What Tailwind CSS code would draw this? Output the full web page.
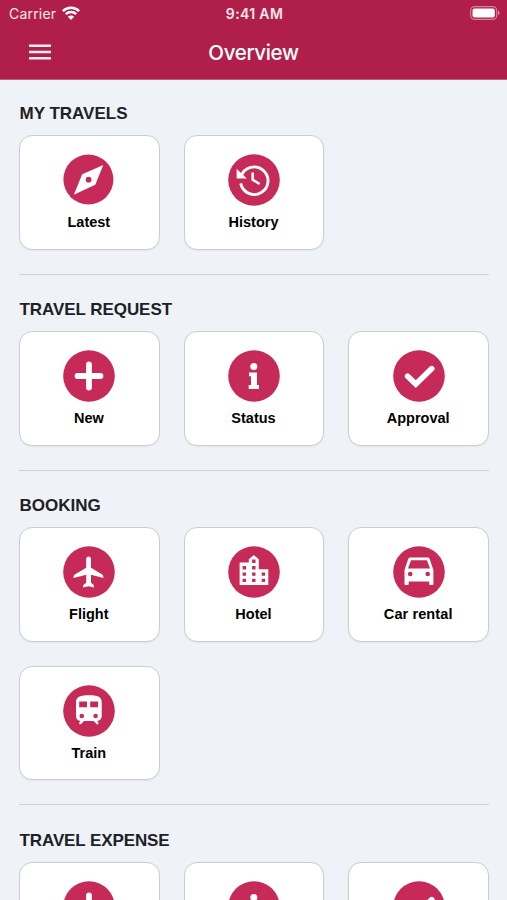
<!DOCTYPE html>
<html lang="en">
<head>
  <meta charset="UTF-8">
  <meta name="viewport" content="width=device-width, initial-scale=1.0">
  <title>Overview</title>
  <script src="https://cdn.jsdelivr.net/npm/@tailwindcss/browser@4"></script>
</head>
<body class="bg-[#eff2f7]">
  <!-- Icon sprite -->
  <svg class="hidden">
    <symbol id="compass" viewBox="0 0 52 52">
      <circle cx="25.4" cy="25.5" r="25" fill="#c62a59"/>
      <path fill="#fff" d="M40.3 11 32.3 30.7 10.8 40.7 19.2 20.3Z"/>
      <circle cx="25.6" cy="25.7" r="2.9" fill="#c62a59"/>
    </symbol>
    <symbol id="history" viewBox="0 0 52 52">
      <circle cx="26" cy="26" r="25.8" fill="#c62a59"/>
      <path fill="none" stroke="#fff" stroke-width="2.9" d="M13.2 22.2A13.8 13.8 0 1 1 12.7 29.4"/>
      <path fill="#fff" d="M8.6 14.8 18.8 24.6H8.6Z"/>
      <path fill="none" stroke="#fff" stroke-width="2.6" d="M24.7 18.6V25.8L31.6 30"/>
    </symbol>
    <symbol id="plus" viewBox="0 0 52 52">
      <circle cx="26" cy="26" r="25.8" fill="#c62a59"/>
      <path stroke="#fff" stroke-width="5.8" stroke-linecap="round" d="M26 14.5V37.5M14.5 26H37.5"/>
    </symbol>
    <symbol id="info" viewBox="0 0 52 52">
      <circle cx="26" cy="26" r="25.8" fill="#c62a59"/>
      <circle cx="25.8" cy="16.5" r="3.5" fill="#fff"/>
      <path fill="#fff" d="M21 22.5H29V35H31V39H20.7V35H23V26.3H21Z"/>
    </symbol>
    <symbol id="check" viewBox="0 0 52 52">
      <circle cx="26" cy="26" r="25.8" fill="#c62a59"/>
      <path fill="none" stroke="#fff" stroke-width="5.6" stroke-linecap="round" d="M14.6 26.3 22.8 34.1 38.8 18.6"/>
    </symbol>
    <symbol id="plane" viewBox="0 0 52 52">
      <circle cx="26" cy="26" r="25.8" fill="#c62a59"/>
      <path fill="#fff" d="M25.6 10.6C27.1 10.6 28 11.8 28 13.2V21.7L39.2 28.6C40.1 29.2 40.4 30 40.4 32L28 28.8V36.8L31 39.3V41.6L25.6 40.3 20 41.6V39.3L23.2 36.8V28.8L10.5 32C10.5 30 10.9 29.2 11.8 28.6L23.2 21.7V13.2C23.2 11.8 24.1 10.6 25.6 10.6Z"/>
    </symbol>
    <symbol id="hotel" viewBox="0 0 52 52">
      <circle cx="26" cy="26" r="25.8" fill="#c62a59"/>
      <path fill="#fff" d="M11.6 16.4H20.8V13.3L25.8 9 30.8 13.3V23.3H40.3V39H11.6Z"/>
      <path fill="#c62a59" d="M24.1 13.6h3.4v3.4h-3.4zM14.6 20h3.4v3.4h-3.4zM24.1 20h3.4v3.4h-3.4zM14.6 26.4h3.4v3.4h-3.4zM24.1 26.4h3.4v3.4h-3.4zM33.7 26.4h3.4v3.4h-3.4zM14.6 32.7h3.4v3.4h-3.4zM24.1 32.7h3.4v3.4h-3.4zM33.7 32.7h3.4v3.4h-3.4z"/>
    </symbol>
    <symbol id="car" viewBox="0 0 52 52">
      <circle cx="26" cy="26" r="25.8" fill="#c62a59"/>
      <path fill="#fff" d="M17.6 11.6H34.4C35.6 11.6 36.4 12.2 36.8 13.3L40.4 24V38C40.4 38.7 40 39.1 39.3 39.1H37.4C36.7 39.1 36.2 38.7 36.2 38V35.6H15.7V38C15.7 38.7 15.2 39.1 14.5 39.1H12.6C11.9 39.1 11.5 38.7 11.5 38V24L15.1 13.3C15.5 12.2 16.4 11.6 17.6 11.6Z"/>
      <path fill="#c62a59" d="M18 14.2H33.9L37 22.4H15Z"/>
      <circle cx="17.2" cy="28" r="2.3" fill="#c62a59"/>
      <circle cx="34.7" cy="28" r="2.3" fill="#c62a59"/>
    </symbol>
    <symbol id="train" viewBox="0 0 52 52">
      <circle cx="26" cy="26" r="25.8" fill="#c62a59"/>
      <path fill="#fff" d="M13 17C13 11.6 18 10.2 26 10.2S38.7 11.6 38.7 17V31C38.7 34 36.8 35.6 34.2 36L35.3 37.3V39.3H33.8L30.6 36H21L17.8 39.3H16.3V37.3L17.5 36C14.9 35.6 13 34 13 31Z"/>
      <path fill="#c62a59" d="M16.2 16.4h7.8v5.8h-7.8zM27.2 16.4h7.9v5.8h-7.9z"/>
      <circle cx="18.8" cy="31" r="2.3" fill="#c62a59"/>
      <circle cx="32.6" cy="31" r="2.3" fill="#c62a59"/>
    </symbol>
  </svg>

  <div class="h-[900px] overflow-hidden bg-[#eff2f7] font-['Liberation_Sans',Arial,sans-serif]">
    <!-- Header -->
    <header class="h-[79.5px] bg-[#b01f4b] border-b border-[#c75b7c] text-white font-[Inter,sans-serif]">
      <div class="grid grid-cols-3 items-center h-[27px] pl-[9px] pr-[7px] text-[14px] leading-[27px]">
        <div class="flex items-center gap-[6px] tracking-[0.2px] text-white/90">
          <span>Carrier</span>
          <svg class="w-[18px] h-[14px] -mt-[2px]" viewBox="0 0 18 14" fill="none" stroke="#fff" stroke-width="2.5">
            <path d="M.9 5.1a11.5 11.5 0 0 1 16.2 0M3.8 8.2a7.4 7.4 0 0 1 10.4 0"/>
            <path fill="#fff" stroke="none" d="M9 14 5.9 10.7a4.4 4.4 0 0 1 6.2 0Z"/>
          </svg>
        </div>
        <span class="text-center font-semibold text-[14px] tracking-[0.35px] text-white/90">9:41 AM</span>
        <svg class="justify-self-end w-[30px] h-[14px] -mt-px" viewBox="0 0 30 14">
          <rect x=".7" y=".6" width="26" height="12.8" rx="3.8" fill="none" stroke="#fff" stroke-opacity=".45" stroke-width="1.1"/>
          <rect x="2.5" y="2.4" width="22.3" height="9.2" rx="2" fill="#fff"/>
          <path fill="#fff" fill-opacity=".5" d="M28 4.8c2 .6 2 3.8 0 4.4z"/>
        </svg>
      </div>
      <div class="grid grid-cols-3 items-center h-[50px] px-[29px]">
        <button class="w-[22px] h-[16px] -mt-[2px]">
          <svg class="w-[22px] h-[16px]" viewBox="0 0 22 16" stroke="#fff" stroke-opacity=".92" stroke-width="2.4">
            <path d="M0 1.7H22M0 8H22M0 14.2H22"/>
          </svg>
        </button>
        <h1 class="text-center text-[20.5px] leading-[52px] font-medium tracking-[-0.35px] text-white">Overview</h1>
      </div>
    </header>

    <!-- Sections -->
    <main class="pl-[19px] pr-[18px] pt-[22.5px]">
      <section class="pb-6 mb-[23.5px] border-b border-[#cfd2d8]">
        <h2 class="pl-[0.5px] mb-[9px] text-[17px] leading-6 font-bold text-[#1d2126]">MY TRAVELS</h2>
        <div class="grid grid-cols-3 gap-6">
          <a class="flex flex-col items-center h-[114.5px] pt-[18.3px] bg-white border border-[#cbcdd1] rounded-[13px] shadow-xs">
            <svg class="w-[52px] h-[52px]"><use href="#compass"/></svg>
            <span class="mt-[6px] pr-px text-[14.5px] leading-5 font-bold text-black">Latest</span>
          </a>
          <a class="flex flex-col items-center h-[114.5px] pt-[18.3px] bg-white border border-[#cbcdd1] rounded-[13px] shadow-xs">
            <svg class="w-[52px] h-[52px]"><use href="#history"/></svg>
            <span class="mt-[6px] pr-px text-[14.5px] leading-5 font-bold text-black">History</span>
          </a>
        </div>
      </section>

      <section class="pb-6 mb-[23.5px] border-b border-[#cfd2d8]">
        <h2 class="pl-[0.5px] mb-[9px] text-[17px] leading-6 font-bold tracking-[-0.06px] text-[#1d2126]">TRAVEL REQUEST</h2>
        <div class="grid grid-cols-3 gap-6">
          <a class="flex flex-col items-center h-[114.5px] pt-[18.3px] bg-white border border-[#cbcdd1] rounded-[13px] shadow-xs">
            <svg class="w-[52px] h-[52px]"><use href="#plus"/></svg>
            <span class="mt-[6px] pr-px text-[14.5px] leading-5 font-bold text-black">New</span>
          </a>
          <a class="flex flex-col items-center h-[114.5px] pt-[18.3px] bg-white border border-[#cbcdd1] rounded-[13px] shadow-xs">
            <svg class="w-[52px] h-[52px]"><use href="#info"/></svg>
            <span class="mt-[6px] pr-px text-[14.5px] leading-5 font-bold text-black">Status</span>
          </a>
          <a class="flex flex-col items-center h-[114.5px] pt-[18.3px] bg-white border border-[#cbcdd1] rounded-[13px] shadow-xs">
            <svg class="w-[52px] h-[52px]"><use href="#check"/></svg>
            <span class="mt-[6px] pr-px text-[14.5px] leading-5 font-bold text-black">Approval</span>
          </a>
        </div>
      </section>

      <section class="pb-6 mb-[23.5px] border-b border-[#cfd2d8]">
        <h2 class="pl-[0.5px] mb-[9px] text-[17px] leading-6 font-bold text-[#1d2126]">BOOKING</h2>
        <div class="grid grid-cols-3 gap-6">
          <a class="flex flex-col items-center h-[114.5px] pt-[18.3px] bg-white border border-[#cbcdd1] rounded-[13px] shadow-xs">
            <svg class="w-[52px] h-[52px]"><use href="#plane"/></svg>
            <span class="mt-[6px] pr-px text-[14.5px] leading-5 font-bold text-black">Flight</span>
          </a>
          <a class="flex flex-col items-center h-[114.5px] pt-[18.3px] bg-white border border-[#cbcdd1] rounded-[13px] shadow-xs">
            <svg class="w-[52px] h-[52px]"><use href="#hotel"/></svg>
            <span class="mt-[6px] pr-px text-[14.5px] leading-5 font-bold text-black">Hotel</span>
          </a>
          <a class="flex flex-col items-center h-[114.5px] pt-[18.3px] bg-white border border-[#cbcdd1] rounded-[13px] shadow-xs">
            <svg class="w-[52px] h-[52px]"><use href="#car"/></svg>
            <span class="mt-[6px] pr-px text-[14.5px] leading-5 font-bold tracking-[0.1px] text-black">Car rental</span>
          </a>
          <a class="flex flex-col items-center h-[114.5px] pt-[18.3px] bg-white border border-[#cbcdd1] rounded-[13px] shadow-xs">
            <svg class="w-[52px] h-[52px]"><use href="#train"/></svg>
            <span class="mt-[6px] pr-px text-[14.5px] leading-5 font-bold text-black">Train</span>
          </a>
        </div>
      </section>

      <section>
        <h2 class="pl-[0.5px] mb-[9px] text-[17px] leading-6 font-bold tracking-[-0.1px] text-[#1d2126]">TRAVEL EXPENSE</h2>
        <div class="grid grid-cols-3 gap-6">
          <a class="flex flex-col items-center h-[114.5px] pt-[18.3px] bg-white border border-[#cbcdd1] rounded-[13px] shadow-xs">
            <svg class="w-[52px] h-[52px]"><use href="#plus"/></svg>
          </a>
          <a class="flex flex-col items-center h-[114.5px] pt-[18.3px] bg-white border border-[#cbcdd1] rounded-[13px] shadow-xs">
            <svg class="w-[52px] h-[52px]"><use href="#info"/></svg>
          </a>
          <a class="flex flex-col items-center h-[114.5px] pt-[18.3px] bg-white border border-[#cbcdd1] rounded-[13px] shadow-xs">
            <svg class="w-[52px] h-[52px]"><use href="#check"/></svg>
          </a>
        </div>
      </section>
    </main>
  </div>
</body>
</html>
